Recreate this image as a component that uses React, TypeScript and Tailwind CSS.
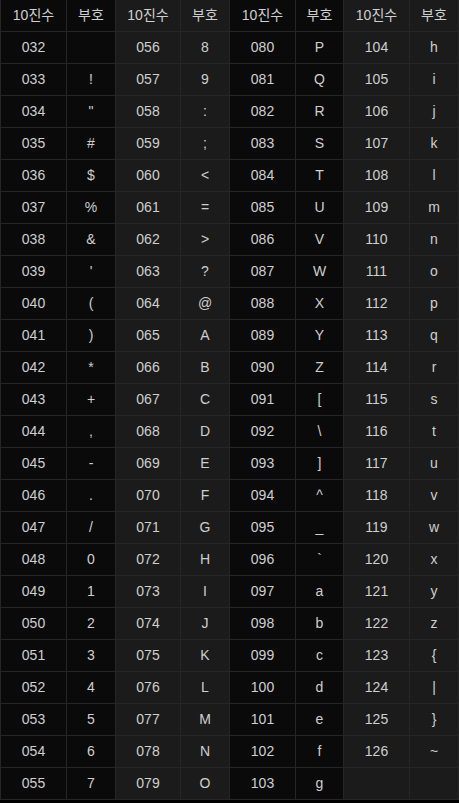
import React from "react";

const widths = ["w-[66px]", "w-[49px]", "w-[65px]", "w-[49px]", "w-[66px]", "w-[48px]", "w-[66px]", "w-[49px]"];

function sym(code: number): string {
  if (code > 126) return "";
  if (code === 32) return "";
  return String.fromCharCode(code);
}

export default function App() {
  const rows: number[] = Array.from({ length: 24 }, (_, i) => i);
  return (
    <div className="w-[459px] h-[803px] bg-black" style={{ fontFamily: '"Liberation Sans", "Noto Sans CJK KR", sans-serif' }}>
      <div className="flex flex-col w-[459px] border-l border-t border-[#262626] text-[14px] text-[#cfcfcf]">
        <div className="flex h-[32px] -mt-px">
          {widths.map((w, c) => (
            <div
              key={c}
              className={`${w} flex items-center justify-center border-r border-b border-[#262626] ${Math.floor(c / 2) % 2 === 0 ? "bg-[#0a0a0a]" : "bg-[#1b1b1b]"}`}
            >
              {c % 2 === 0 ? "10진수" : "부호"}
            </div>
          ))}
        </div>
        {rows.map((r) => (
          <div key={r} className="flex h-[32px]">
            {[0, 1, 2, 3].map((g) => {
              const code = 32 + g * 24 + r;
              const valid = code <= 126;
              const bg = g % 2 === 0 ? "bg-[#0a0a0a]" : "bg-[#1b1b1b]";
              return (
                <React.Fragment key={g}>
                  <div className={`${widths[g * 2]} ${bg} flex items-center justify-center border-r border-b border-[#262626]`}>
                    {valid ? String(code).padStart(3, "0") : ""}
                  </div>
                  <div className={`${widths[g * 2 + 1]} ${bg} flex items-center justify-center border-r border-b border-[#262626]`}>
                    {valid ? sym(code) : ""}
                  </div>
                </React.Fragment>
              );
            })}
          </div>
        ))}
      </div>
    </div>
  );
}
